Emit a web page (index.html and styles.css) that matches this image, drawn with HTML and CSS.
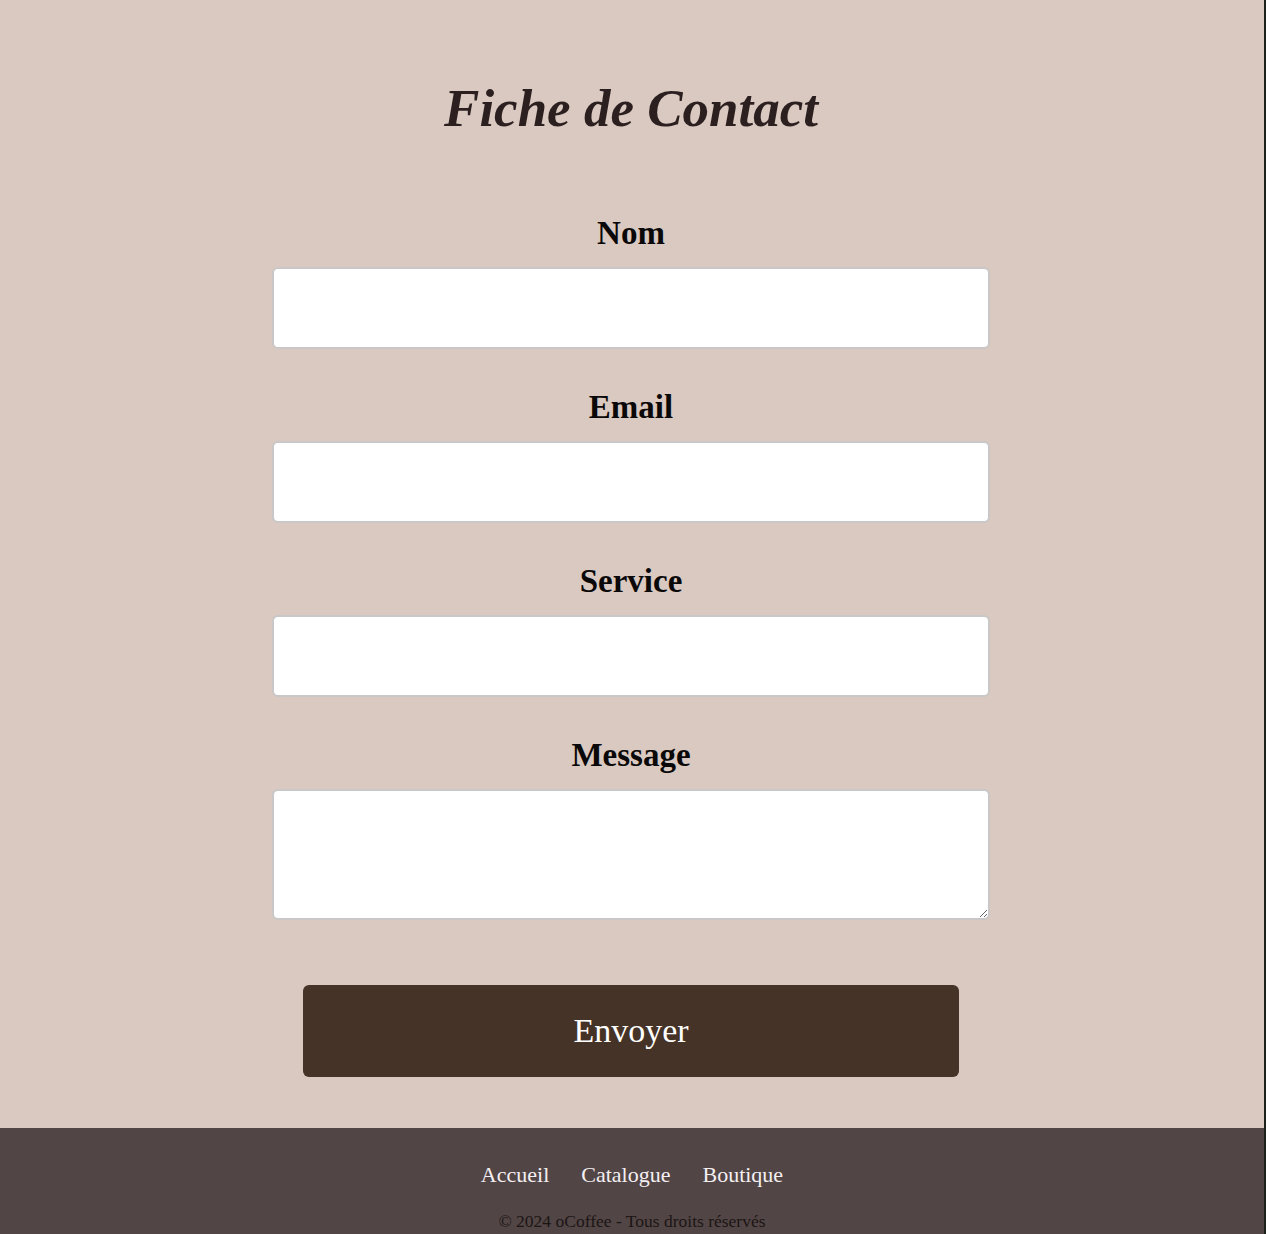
FILE: index.html
```html
<!DOCTYPE html>
<html lang="fr">
<head>
<meta charset="utf-8">
<title>Fiche de Contact</title>
<link rel="stylesheet" href="styles.css">
</head>
<body>
<div class="page">
  <main class="content">
    <h1 class="title">Fiche de Contact</h1>
    <form class="contact-form">
      <div class="field">
        <label class="label" for="nom">Nom</label>
        <input class="input" id="nom" type="text">
      </div>
      <div class="field">
        <label class="label" for="email">Email</label>
        <input class="input" id="email" type="email">
      </div>
      <div class="field">
        <label class="label" for="service">Service</label>
        <input class="input" id="service" type="text">
      </div>
      <div class="field">
        <label class="label" for="message">Message</label>
        <textarea class="input textarea" id="message"></textarea>
      </div>
      <button class="submit" type="button">Envoyer</button>
    </form>
  </main>
  <footer class="footer">
    <nav class="footer-nav">
      <a href="#" class="footer-link">Accueil</a>
      <a href="#" class="footer-link">Catalogue</a>
      <a href="#" class="footer-link">Boutique</a>
    </nav>
    <p class="copyright">© 2024 oCoffee - Tous droits réservés</p>
  </footer>
</div>
</body>
</html>
```

FILE: styles.css
```css
html, body {
  margin: 0;
  padding: 0;
}

body {
  background: #1c211c;
  font-family: "Liberation Serif", "Times New Roman", serif;
  height: 1234px;
  overflow: hidden;
}

.page {
  margin-right: 2px;
  background: #d9c9c0;
  min-height: 1234px;
  display: flex;
  flex-direction: column;
}

.content {
  display: flex;
  flex-direction: column;
  align-items: center;
  padding-right: 2px;
}

.title {
  margin: 76px 0 0;
  font-size: 53px;
  line-height: 64px;
  font-style: italic;
  font-weight: 700;
  color: #2b1f1f;
  text-align: center;
}

.contact-form {
  width: 718px;
  margin-top: 73px;
  display: flex;
  flex-direction: column;
  align-items: center;
}

.field {
  width: 100%;
  display: flex;
  flex-direction: column;
  align-items: center;
  margin-bottom: 38px;
}

.label {
  font-size: 33px;
  line-height: 40px;
  font-weight: 700;
  color: #0a0808;
  margin-bottom: 14px;
}

.input {
  box-sizing: border-box;
  display: block;
  width: 718px;
  height: 82px;
  background: #ffffff;
  border: 2px solid #c9c7c7;
  border-radius: 6px;
  font-family: inherit;
  font-size: 18px;
  padding: 8px 12px;
  margin: 0;
  outline: none;
}

.textarea {
  height: 131px;
}

.submit {
  width: 656px;
  height: 92px;
  margin-top: 27px;
  background: #463327;
  color: #ffffff;
  border: none;
  border-radius: 6px;
  font-family: inherit;
  font-size: 34px;
  cursor: pointer;
}

.footer {
  margin-top: 51px;
  background: #524545;
  flex: 1;
  display: flex;
  flex-direction: column;
  align-items: center;
  padding-top: 35px;
}

.footer-nav {
  display: flex;
  gap: 32px;
}

.footer-link {
  color: #f4eff2;
  text-decoration: none;
  font-size: 22px;
  line-height: 24px;
}

.copyright {
  margin: 24px 0 0;
  font-size: 17.5px;
  line-height: 20px;
  color: #1b1514;
}
```
